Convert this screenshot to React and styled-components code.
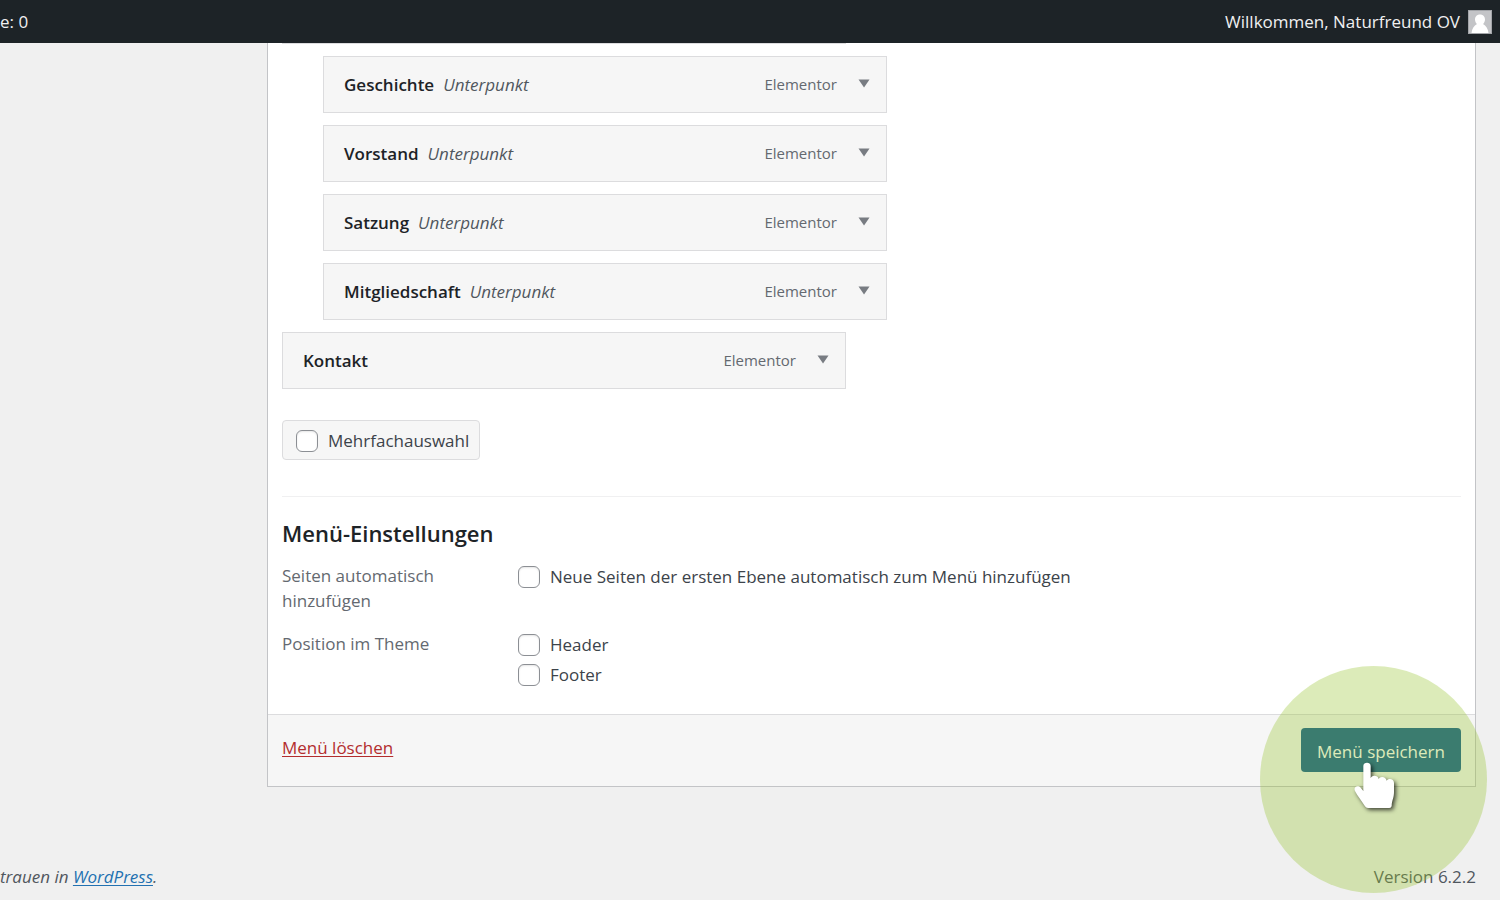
import React from "react";
import styled, { createGlobalStyle } from "styled-components";

const GlobalStyle = createGlobalStyle`
  *, *::before, *::after { box-sizing: border-box; }
  body {
    margin: 0;
    background: #f0f0f0;
    color: #3c434a;
    font-family: "Segoe UI", "Open Sans", "Noto Sans", sans-serif;
    font-size: 17px;
    line-height: 25px;
    overflow-x: hidden;
  }
`;

const AdminBar = styled.header`
  display: flex;
  align-items: center;
  justify-content: space-between;
  height: 43px;
  padding: 0 8px 0 0;
  background: #1d2327;
  color: #f0f0f1;
`;

const Account = styled.div`
  display: flex;
  align-items: center;
  gap: 8px;
`;

const Avatar = styled.svg`
  width: 24px;
  height: 24px;
  border: 1px solid #a3a5a9;
`;

const Content = styled.main`
  padding: 0 24px 0 267px;
`;

const Panel = styled.form`
  border: 1px solid #c3c4c7;
  border-top: 0;
  background: #fff;
`;

const PanelBody = styled.div`
  padding: 0 14px 27px;
`;

const MenuList = styled.ul`
  display: flex;
  flex-direction: column;
  gap: 12px;
  margin: 0;
  padding: 0;
  list-style: none;
`;

const ListEdge = styled.li`
  max-width: 564px;
  height: 1px;
  background: #dcdcde;
`;

const MenuItem = styled.li`
  display: flex;
  align-items: center;
  width: 100%;
  max-width: 564px;
  height: 57px;
  margin-left: ${(p) => (p.$nested ? "41px" : "0")};
  padding: 0 16px 0 20px;
  border: 1px solid #dcdcde;
  background: #f6f6f6;
`;

const ItemTitle = styled.span`
  color: #1d2327;
  font-weight: 600;
`;

const ItemNote = styled.span`
  margin-left: 9px;
  color: #50575e;
  font-style: italic;
`;

const ItemType = styled.span`
  margin-left: auto;
  color: #646970;
  font-size: 15px;
`;

const Toggle = styled.button`
  display: flex;
  margin: 0 0 2px 21px;
  padding: 0;
  border: 0;
  background: none;
  color: #787c82;
`;

const BulkSelect = styled.label`
  display: inline-flex;
  align-items: center;
  gap: 10px;
  height: 40px;
  margin-top: 31px;
  padding: 1px 10px 0 13px;
  border: 1px solid #dcdcde;
  border-radius: 4px;
  background: #f6f6f6;
`;

const Checkbox = styled.input.attrs({ type: "checkbox" })`
  appearance: none;
  flex: none;
  width: 22px;
  height: 22px;
  margin: 0;
  border: 1px solid #8c8f94;
  border-radius: 6px;
  background: #fff;
  box-shadow: inset 0 1px 2px rgba(0, 0, 0, 0.1);
`;

const Settings = styled.section`
  margin-top: 36px;
  padding-top: 23px;
  border-top: 1px solid #f0f0f1;
`;

const SettingsTitle = styled.h3`
  margin: 0 0 17px;
  color: #1d2327;
  font-size: 22px;
  line-height: 26px;
  font-weight: 600;
`;

const SettingRow = styled.div`
  display: grid;
  grid-template-columns: 236px 1fr;
  margin-bottom: ${(p) => (p.$last ? "0" : "18px")};
`;

const SettingName = styled.div`
  max-width: 200px;
  color: #646970;
`;

const Options = styled.div`
  display: flex;
  flex-direction: column;
  align-items: flex-start;
  gap: 5px;
  padding-top: 1px;
`;

const Option = styled.label`
  display: flex;
  align-items: center;
  gap: 10px;
`;

const Actions = styled.div`
  display: flex;
  align-items: flex-start;
  justify-content: space-between;
  height: 72px;
  padding: 13px 14px;
  border-top: 1px solid #dcdcde;
  background: #f6f6f6;
`;

const TextLink = styled.a`
  color: ${(p) => (p.$danger ? "#b32d2e" : "#2271b1")};
  text-decoration: underline;
  text-underline-offset: 2px;
`;

const DeleteArea = styled.div`
  padding-top: 7px;
`;

const SaveArea = styled.div`
  position: relative;
`;

const SaveButton = styled.button`
  display: block;
  width: 160px;
  height: 44px;
  padding: 3px 0 0;
  border: 0;
  border-radius: 4px;
  background: #0f5a91;
  color: #fff;
  font: inherit;
`;

const Spotlight = styled.div`
  position: absolute;
  top: -62px;
  left: -41px;
  width: 227px;
  height: 227px;
  border-radius: 50%;
  background: rgba(149, 194, 43, 0.33);
  pointer-events: none;
`;

const Hand = styled.svg`
  position: absolute;
  top: 34px;
  left: 53px;
  width: 41px;
  height: 47px;
  overflow: visible;
  pointer-events: none;
  filter: drop-shadow(2px 2px 2px rgba(0, 0, 0, 0.7));
`;

const Footer = styled.footer`
  display: flex;
  justify-content: space-between;
  padding: 77px 24px 10px 0;
  color: #50575e;
`;

const Thanks = styled.span`
  font-style: italic;
`;

const subItems = ["Geschichte", "Vorstand", "Satzung", "Mitgliedschaft"];

function Item({ title, nested }) {
  return (
    <MenuItem $nested={nested}>
      <ItemTitle>{title}</ItemTitle>
      {nested && <ItemNote>Unterpunkt</ItemNote>}
      <ItemType>Elementor</ItemType>
      <Toggle type="button" aria-label={title}>
        <svg width="12" height="9" viewBox="0 0 12 9" aria-hidden="true">
          <path d="M.5.5h11L6 8.5Z" fill="currentColor" />
        </svg>
      </Toggle>
    </MenuItem>
  );
}

export default function App() {
  return (
    <>
      <GlobalStyle />
      <AdminBar>
        <span>e: 0</span>
        <Account>
          <span>Willkommen, Naturfreund OV</span>
          <Avatar viewBox="0 0 22 22" aria-hidden="true">
            <path d="M0 0h22v22H0Z" fill="#c3c4c7" />
            <path
              d="M11 3.500C7.800 3.500 6 5.800 6 8.500c0 1.800.8 3.500 2 4.500C5 14.500 3 17.500 2.500 22h17c-.5-4.500-2.500-7.500-5.500-9 1.200-1 2-2.700 2-4.500 0-2.700-1.800-5-5-5Z"
              fill="#fff"
            />
          </Avatar>
        </Account>
      </AdminBar>

      <Content>
        <Panel onSubmit={(e) => e.preventDefault()}>
          <PanelBody>
            <MenuList>
              <ListEdge aria-hidden="true" />
              {subItems.map((title) => (
                <Item key={title} title={title} nested />
              ))}
              <Item title="Kontakt" />
            </MenuList>

            <BulkSelect>
              <Checkbox />
              Mehrfachauswahl
            </BulkSelect>

            <Settings>
              <SettingsTitle>Menü-Einstellungen</SettingsTitle>
              <SettingRow>
                <SettingName>Seiten automatisch hinzufügen</SettingName>
                <Options>
                  <Option>
                    <Checkbox />
                    Neue Seiten der ersten Ebene automatisch zum Menü hinzufügen
                  </Option>
                </Options>
              </SettingRow>
              <SettingRow $last>
                <SettingName>Position im Theme</SettingName>
                <Options>
                  <Option>
                    <Checkbox />
                    Header
                  </Option>
                  <Option>
                    <Checkbox />
                    Footer
                  </Option>
                </Options>
              </SettingRow>
            </Settings>
          </PanelBody>

          <Actions>
            <DeleteArea>
              <TextLink href="#delete" $danger>
                Menü löschen
              </TextLink>
            </DeleteArea>
            <SaveArea>
              <SaveButton type="submit">Menü speichern</SaveButton>
              <Spotlight />
              <Hand viewBox="0 0 123 141" aria-hidden="true">
                <path
                  d="M28 12C28 -1 50 -1 50 12V49C52 38 72 38 74 51C78 41 96 43 98 56C103 48 120 50 120 63V90C120 108 113 116 113 132Q112 138 106 138H42Q36 138 33 133C24 117 10 102 3 87C-3 74 12 68 20 77L28 87Z"
                  fill="#fff"
                />
              </Hand>
            </SaveArea>
          </Actions>
        </Panel>
      </Content>

      <Footer>
        <Thanks>
          trauen in <TextLink href="#wordpress">WordPress</TextLink>.
        </Thanks>
        <span>Version 6.2.2</span>
      </Footer>
    </>
  );
}
